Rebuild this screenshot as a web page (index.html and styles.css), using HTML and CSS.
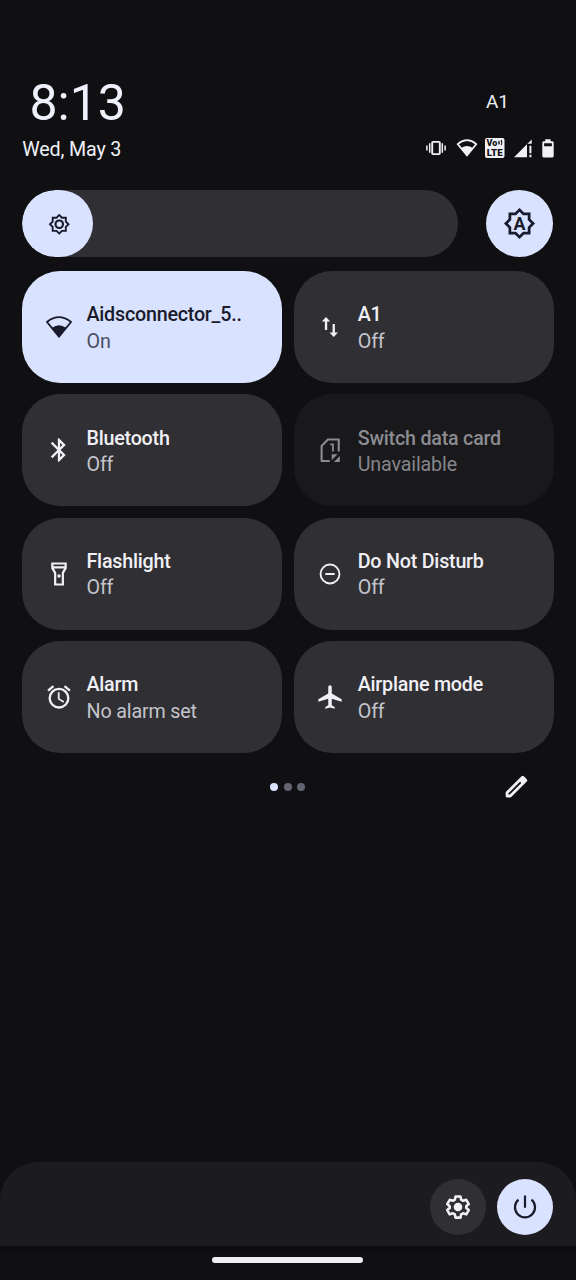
FILE: index.html
```html
<!DOCTYPE html>
<html lang="en">
<head>
<meta charset="utf-8">
<title>Quick settings</title>
<link rel="stylesheet" href="styles.css">
</head>
<body>
<main class="panel">
  <header class="header">
    <div class="header-row header-top"><time class="clock">8:13</time><span class="carrier">A1</span></div>
    <div class="header-row header-bottom">
      <span class="date">Wed, May 3</span>
      <div class="status">
        <svg class="st-vibrate" width="20" height="16" viewBox="0 0 20 16"><path d="M.9 5.5v5M3.7 3.2v9.6M16.3 3.2v9.6M19.1 5.5v5" stroke="currentColor" stroke-width="1.5"/><rect x="6.2" y="1.9" width="7.6" height="12.2" rx=".8" fill="none" stroke="currentColor" stroke-width="1.9"/></svg>
        <svg class="st-wifi" width="22" height="20" viewBox="0 0 22 20"><path d="M1.7 6.1Q11-1.7 20.3 6.1L11 17.3Z" fill="none" stroke="currentColor" stroke-width="1.7"/><path d="M5.2 10Q11 5.8 16.8 10L11 17.8Z" fill="currentColor"/></svg>
        <svg class="st-volte" width="20" height="20" viewBox="0 0 20 20"><rect width="19.5" height="20" rx="2" fill="currentColor"/><text class="vo" x="1.6" y="8" textLength="10.8" lengthAdjust="spacingAndGlyphs">Vo</text><path d="M13.6 2.8q1.100 1.700 0 3.600M16.100 2.200q1.500 2.400.1 4.800" fill="none" stroke="#111113" stroke-width="1.300"/><text class="lte" x="1.700" y="18" textLength="16" lengthAdjust="spacingAndGlyphs">LTE</text></svg>
        <svg class="st-signal" width="19" height="19" viewBox="0 0 19 19"><path d="M0 18.200 17.700.4v4.400H13v13.400Z" fill="currentColor"/><path d="M16.400 6.800v7.500M16.400 15.800v2.400" stroke="currentColor" stroke-width="2"/></svg>
        <svg class="st-battery" width="12" height="19" viewBox="0 0 12 19"><path fill="currentColor" fill-rule="evenodd" d="M3.200.3h5.400v2h1.700q1.400 0 1.400 1.400v13.400q0 1.400-1.400 1.400H1.700Q.3 18.500.3 17.100V3.700Q.3 2.300 1.700 2.300H3.200ZM2.100 4.300v3h7.800v-3Z"/></svg>
      </div>
    </div>
  </header>

  <section class="brightness">
    <div class="slider"><div class="slider-fill">
      <svg width="22.500" height="22.500" viewBox="0 0 24 24"><path fill="currentColor" d="M20 8.690V4h-4.690L12 .690 8.690 4H4v4.690L.690 12 4 15.310V20h4.690L12 23.310 15.310 20H20v-4.690L23.310 12 20 8.690zm-2 5.790V18h-3.520L12 20.480 9.520 18H6v-3.520L3.520 12 6 9.520V6h3.520L12 3.520 14.480 6H18v3.520L20.480 12 18 14.480z"/><circle cx="12" cy="12" r="4" fill="none" stroke="currentColor" stroke-width="2.300"/></svg>
    </div></div>
    <button class="auto" aria-label="Automatic brightness">
      <svg width="33" height="33" viewBox="0 0 24 24"><path fill="currentColor" d="M20 8.690V4h-4.690L12 .690 8.690 4H4v4.690L.690 12 4 15.310V20h4.690L12 23.310 15.310 20H20v-4.690L23.310 12 20 8.690zm-2 5.790V18h-3.520L12 20.480 9.520 18H6v-3.520L3.520 12 6 9.520V6h3.520L12 3.520 14.480 6H18v3.520L20.480 12 18 14.480z"/><text class="auto-letter" x="12" y="16.400" text-anchor="middle">A</text></svg>
    </button>
  </section>

  <section class="tiles">
    <div class="tile active">
      <svg class="icon" viewBox="0 0 24 24"><path d="M1.700 7.700Q12-.600 22.300 7.700L12 20.300Z" fill="none" stroke="currentColor" stroke-width="1.600" stroke-linejoin="round"/><path d="M6 12.600Q12 8.200 18 12.600L12 20.600Z" fill="currentColor"/></svg>
      <div class="label"><b>Aidsconnector_5..</b><span>On</span></div>
    </div>
    <div class="tile">
      <svg class="icon" viewBox="0 0 24 24"><path d="M8.600 14.500V5M15.200 9.500V19" fill="none" stroke="currentColor" stroke-width="2"/><path d="M5 7.300 8.600 3.500l3.600 3.800ZM11.600 16.700l3.600 3.800 3.600-3.800Z" fill="currentColor"/></svg>
      <div class="label"><b>A1</b><span>Off</span></div>
    </div>
    <div class="tile">
      <svg class="icon" viewBox="0 0 24 24"><path fill="currentColor" d="M17.710 7.710 12 2h-1v7.590L6.410 5 5 6.410 10.590 12 5 17.590 6.410 19 11 14.410V22h1l5.710-5.710-4.300-4.290 4.300-4.290zM13 5.830l1.880 1.880L13 9.590V5.830zm1.880 10.460L13 18.170v-3.760l1.880 1.880z"/></svg>
      <div class="label"><b>Bluetooth</b><span>Off</span></div>
    </div>
    <div class="tile unavailable">
      <svg class="icon" viewBox="0 0 24 24"><path d="M11.800 21.400H4.800V8.600L10.200 3H19.500V13.300" fill="none" stroke="currentColor" stroke-width="1.800" stroke-linejoin="round"/><path d="M12.200 7.200H14.500V13.200" fill="none" stroke="currentColor" stroke-width="1.500"/><path d="M13.500 15.700h5l-5 5ZM20.400 17.200v5h-5Z" fill="currentColor"/></svg>
      <div class="label"><b>Switch data card</b><span>Unavailable</span></div>
    </div>
    <div class="tile">
      <svg class="icon" viewBox="0 0 24 24"><path d="M6.300 3h11.400v4L15.300 11v10H8.700V11L6.300 7ZM6.300 6.400h11.400" fill="none" stroke="currentColor" stroke-width="1.900"/><circle cx="12" cy="13.700" r="1.500" fill="currentColor"/></svg>
      <div class="label"><b>Flashlight</b><span>Off</span></div>
    </div>
    <div class="tile">
      <svg class="icon" viewBox="0 0 24 24"><circle cx="12" cy="12" r="8.100" fill="none" stroke="currentColor" stroke-width="1.600"/><path d="M8 12h8" stroke="currentColor" stroke-width="1.700"/></svg>
      <div class="label"><b>Do Not Disturb</b><span>Off</span></div>
    </div>
    <div class="tile">
      <svg class="icon" viewBox="0 0 24 24"><path fill="currentColor" d="m22 5.720-4.600-3.860-1.290 1.530 4.600 3.860L22 5.720zM7.880 3.390 6.600 1.860 2 5.710l1.290 1.530 4.590-3.850zM12.500 8H11v6l4.750 2.850.75-1.230-4-2.370V8zM12 4a9 9 0 1 0 0 18 9 9 0 0 0 0-18zm0 16a7 7 0 1 1 0-14 7 7 0 0 1 0 14z"/></svg>
      <div class="label"><b>Alarm</b><span>No alarm set</span></div>
    </div>
    <div class="tile">
      <svg class="icon" viewBox="0 0 24 24"><path fill="currentColor" d="M22 16v-2l-8.500-5V3.500C13.500 2.670 12.830 2 12 2s-1.500.670-1.500 1.500V9L2 14v2l8.500-2.500V19L8 20.500V22l4-1 4 1v-1.500L13.500 19v-5.500L22 16z"/></svg>
      <div class="label"><b>Airplane mode</b><span>Off</span></div>
    </div>
  </section>

  <div class="pager">
    <div class="dots"><i class="dot current"></i><i class="dot"></i><i class="dot"></i></div>
    <svg class="edit" viewBox="0 0 24 24"><path d="M4.300 16.900 17.600 3.600l2.800 2.800L7.100 19.700H4.300Z" fill="none" stroke="currentColor" stroke-width="2.400" stroke-linejoin="round"/><path d="m14.300 6.300 3.300-3.100q.8-.6 1.500.1l1.700 1.700q.6.700 0 1.400l-3.200 3.200Z" fill="currentColor"/></svg>
  </div>

  <footer class="footer">
    <button class="round" aria-label="Settings"><svg class="icon" viewBox="0 0 24 24"><path d="M9.900 3h4.200l.6 2.700 1.700 1 2.700-.9 2.100 3.700-2.100 1.800v1.500l2.100 1.800-2.100 3.700-2.700-.9-1.700 1-.6 2.700H9.900l-.6-2.700-1.700-1-2.700.9-2.100-3.700 2.100-1.800v-1.500L2.800 9.500l2.100-3.700 2.700.9 1.700-1Z" fill="none" stroke="currentColor" stroke-width="2.200" stroke-linejoin="round"/><circle cx="12" cy="12" r="3.700" fill="currentColor"/></svg></button>
    <button class="round power" aria-label="Power"><svg class="icon" viewBox="0 0 24 24"><path d="M12 2.200v10.500M6.400 5.700a8.600 8.600 0 1 0 11.200 0" fill="none" stroke="currentColor" stroke-width="1.900"/></svg></button>
  </footer>
  <div class="nav"><div class="handle"></div></div>
</main>
</body>
</html>
```
FILE: styles.css
```css
* { box-sizing: border-box; }
body { margin: 0; background: #101012; color: #f1f0f6; font-family: Roboto, sans-serif; font-size: 19.7px; }
button { padding: 0; border: 0; font: inherit; }
svg { display: block; flex: none; }
.panel { display: flex; flex-direction: column; width: 576px; height: 1280px; }
.header { padding: 73px 22px 0 22.3px; }
.header-row { display: flex; justify-content: space-between; align-items: center; }
.header-top { height: 60px; padding: 0 45px 0 7.2px; }
.clock { font-size: 50px; line-height: 60px; color: #eef0fb; }
.carrier { font-size: 19px; line-height: 24px; margin-top: -2px; }
.header-bottom { height: 32px; }
.date { padding-top: 2px; line-height: 26px; letter-spacing: -.15px; }
.status { display: flex; align-items: center; margin-top: -1.5px; }
.st-wifi { margin-left: 10px; }
.st-volte { margin-left: 7px; }
.st-signal { margin-left: 9px; }
.st-battery { margin-left: 9px; }
.vo, .lte { font-family: Roboto, sans-serif; font-weight: 900; fill: #111113; }
.vo { font-size: 8.6px; }
.lte { font-size: 9.8px; }

.brightness { display: flex; justify-content: space-between; padding: 25.4px 23px 0 22.3px; }
.slider { width: 436px; height: 67px; border-radius: 34px; background: #302f33; overflow: hidden; }
.slider-fill { display: flex; align-items: center; justify-content: center; width: 71px; height: 67px; padding-left: 3.5px; border-radius: 34px; background: #d9e2ff; color: #191b2c; }
.auto { display: flex; align-items: center; justify-content: center; width: 67px; height: 67px; border-radius: 50%; background: #d9e2ff; color: #191b2c; }
.auto-letter { font: 700 13px Roboto, sans-serif; fill: currentColor; }

.tiles { display: grid; grid-template-columns: 1fr 1fr; grid-auto-rows: 112px; gap: 11.3px; padding: 13.6px 22.5px 0 22.3px; }
.tile { display: flex; align-items: center; gap: 13.9px; padding: 0 0 0 22.3px; border-radius: 38px; background: #302f33; }
.icon { width: 28px; height: 28px; }
.label { display: flex; flex-direction: column; padding-top: 3.6px; white-space: nowrap; line-height: 26.3px; }
.label b { font-weight: 500; letter-spacing: -.22px; }
.label span { color: #c4c4cc; letter-spacing: -.15px; }
.active { background: #d9e2ff; color: #191b2c; }
.active .label span { color: #4a4e63; }
.unavailable { background: #19191b; color: #8b8b91; }
.unavailable .label span { color: #85858b; }

.pager { display: grid; grid-template-columns: 1fr auto 1fr; align-items: center; height: 67.5px; padding: 0 46px 0 45px; }
.dots { grid-column: 2; display: flex; gap: 5.5px; }
.dot { width: 8px; height: 8px; border-radius: 50%; background: #62646f; }
.current { background: #d9e2ff; }
.edit { justify-self: end; width: 28px; height: 28px; }

.footer { display: flex; align-items: center; justify-content: flex-end; gap: 11px; height: 84px; margin-top: auto; padding: 5px 22.7px 0; border-radius: 38px 38px 0 0; background: #1c1b1f; }
.round { display: flex; align-items: center; justify-content: center; width: 56px; height: 56px; border-radius: 50%; background: #302f33; color: #f1f0f6; }
.power { background: #d9e2ff; color: #191b2c; }
.nav { display: flex; justify-content: center; height: 34px; padding: 11px 1px 0 0; background: linear-gradient(#0c0c0e, #101012 12px); }
.handle { width: 151px; height: 5.5px; border-radius: 3px; background: #efeff1; }
```
